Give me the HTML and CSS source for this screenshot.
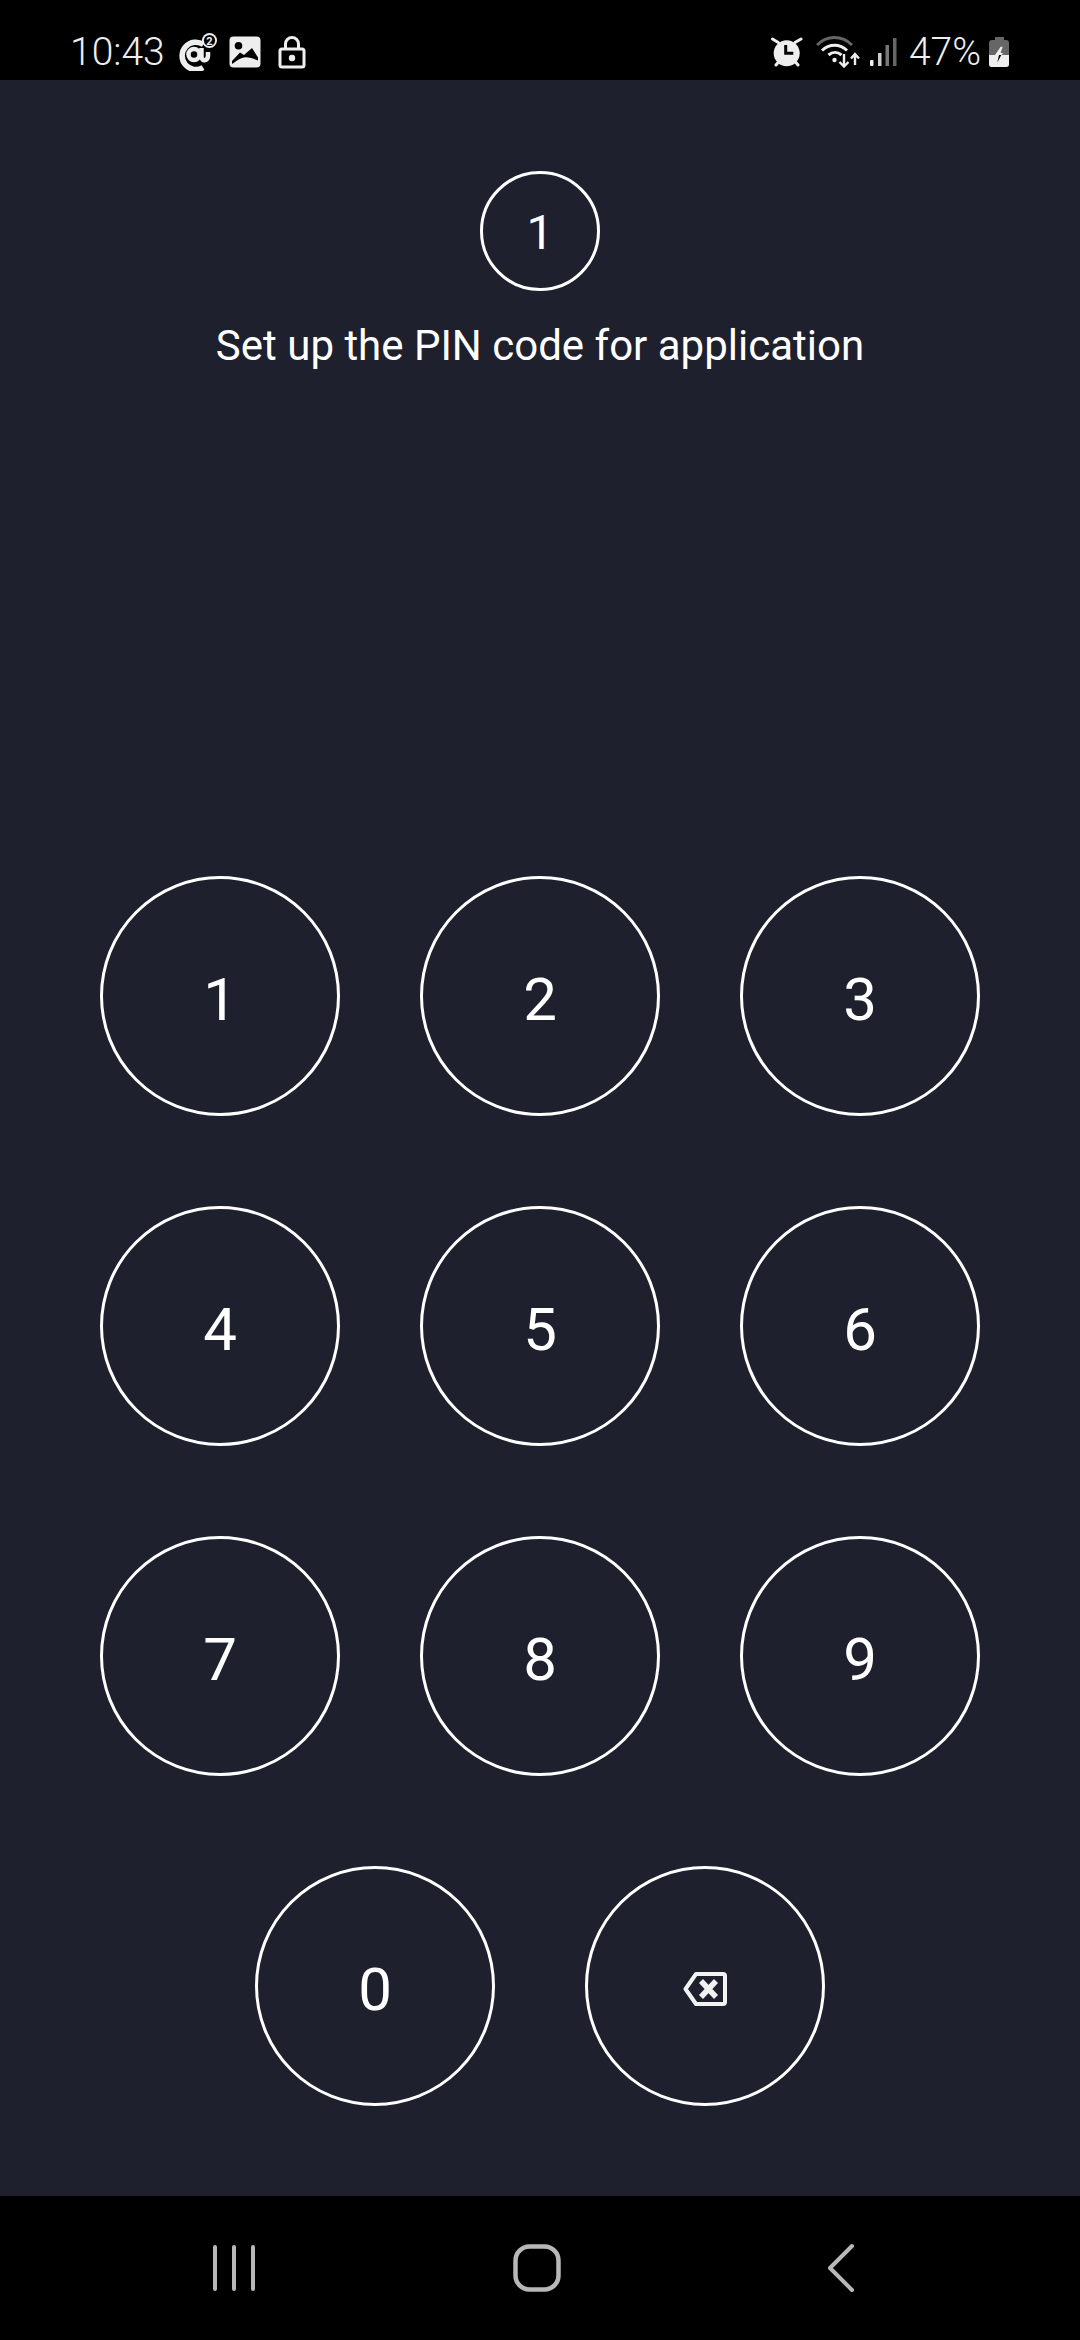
FILE: index.html
```html
<!DOCTYPE html>
<html lang="en">
<head>
<meta charset="utf-8">
<title>Set up PIN</title>
<link rel="stylesheet" href="styles.css">
</head>
<body>
<div class="app">
  <header class="status">
    <div class="status-left">
      <span class="time">10:43</span>
      <svg class="ic ic-at" viewBox="0 0 40 38" width="40" height="38"><path d="M25 34.500A13.700 13.700 0 1 1 25.500 11.500" fill="none" stroke="#eee" stroke-width="5.500"/><circle cx="16" cy="21.500" r="5.500" fill="none" stroke="#eee" stroke-width="4.500"/><path d="M23.500 15v9c0 4.500 6.500 4.500 6.500-1.500V19" fill="none" stroke="#eee" stroke-width="4.500"/><circle cx="31.500" cy="7.500" r="7.500" fill="#eee"/><circle cx="31.500" cy="7.500" r="5.600" fill="#000"/><text x="31.500" y="11.500" class="sup">2</text></svg>
      <svg class="ic ic-pic" viewBox="0 0 32 32" width="32" height="32"><rect x="0.500" y="0.500" width="31" height="31" rx="4" fill="#eee"/><circle cx="9.500" cy="9.700" r="3.800" fill="#000"/><path d="M3 25L11 16.500L15 19L23 12L29 21.500V24.500C25 23 18 20 13 22C9 23.500 6 26 3 28Z" fill="#000"/></svg>
      <svg class="ic ic-lock" viewBox="0 0 28 33" width="28" height="33"><rect x="2" y="13" width="24" height="18" rx="2" fill="none" stroke="#eee" stroke-width="3"/><path d="M7.500 13V8a6.500 6.500 0 0 1 13 0V13" fill="none" stroke="#eee" stroke-width="3"/><circle cx="14" cy="22" r="3.200" fill="#eee"/></svg>
    </div>
    <div class="status-right">
      <svg class="ic ic-alarm" viewBox="0 0 32 32" width="32" height="32"><path d="M1.500 3L7.300 6.500M30 3L24 6.500M5 29l2.500-3M27 29l-2.500-3" fill="none" stroke="#eee" stroke-width="3" stroke-linecap="round"/><circle cx="15.700" cy="17.300" r="13" fill="#eee"/><path d="M14.700 9v8.300h7.600" fill="none" stroke="#000" stroke-width="3"/></svg>
      <svg class="ic ic-wifi" viewBox="0 0 44 32" width="44" height="32"><path d="M1 9C11-1 26-1 36 9" fill="none" stroke="#666" stroke-width="3"/><path d="M6 14.500c7-7 18-7 25 0" fill="none" stroke="#eee" stroke-width="3"/><path d="M12.500 19c4-3.500 9-3.500 13 0" fill="none" stroke="#eee" stroke-width="3"/><circle cx="18.500" cy="24" r="2.200" fill="#eee"/><path d="M28 18v13M23.500 26l4.500 4.500 4.500-4.500" fill="none" stroke="#eee" stroke-width="2.400"/><path d="M39 29V18M35 22.500l4-4.500 4 4.500" fill="none" stroke="#eee" stroke-width="2.400"/></svg>
      <svg class="ic ic-signal" viewBox="0 0 28 32" width="28" height="32"><rect x="1" y="24" width="3.500" height="6" rx="1" fill="#eee"/><rect x="9" y="17" width="3.500" height="13" fill="#ccc"/><rect x="16.500" y="9" width="3.500" height="21" fill="#777"/><rect x="24" y="2" width="3.500" height="28" fill="#666"/></svg>
      <span class="pct">47%</span>
      <svg class="ic ic-batt" viewBox="0 0 20 30" width="20" height="30"><path d="M6 0h9v3h2a3 3 0 0 1 3 3v21a3 3 0 0 1-3 3H3a3 3 0 0 1-3-3V6a3 3 0 0 1 3-3h3z" fill="#666"/><path d="M0 18h20v9a3 3 0 0 1-3 3H3a3 3 0 0 1-3-3z" fill="#eee"/><path d="M11.700 9.700h2L11.500 16h3L12.300 18H6z" fill="#eee"/><path d="M6.500 18h5.800L8.300 25.500 10 18z" fill="#000"/></svg>
    </div>
  </header>

  <main class="screen">
    <div class="step">1</div>
    <h1 class="title">Set up the PIN code for application</h1>
    <div class="keypad">
      <div class="row">
        <button class="key">1</button><button class="key">2</button><button class="key">3</button>
      </div>
      <div class="row">
        <button class="key">4</button><button class="key">5</button><button class="key">6</button>
      </div>
      <div class="row">
        <button class="key">7</button><button class="key">8</button><button class="key">9</button>
      </div>
      <div class="row row-last">
        <button class="key">0</button>
        <button class="key" aria-label="Delete">
          <svg viewBox="0 0 44 34" width="44" height="34"><path d="M13 2h27a2 2 0 0 1 2 2v26a2 2 0 0 1-2 2H13L2.500 17z" fill="none" stroke="#f2f2f2" stroke-width="4" stroke-linejoin="round"/><path d="M18 9l15 16M33 9L18 25" stroke="#f2f2f2" stroke-width="5.500"/></svg>
        </button>
      </div>
    </div>
  </main>

  <nav class="navbar">
    <svg class="nav-recents" viewBox="0 0 44 48" width="44" height="48"><path d="M3 3v42M22 3v42M41 3v42" stroke="#b8b8b8" stroke-width="4" stroke-linecap="round" fill="none"/></svg>
    <svg class="nav-home" viewBox="0 0 48 48" width="48" height="48"><rect x="2.500" y="2.500" width="43" height="43" rx="14" fill="none" stroke="#b8b8b8" stroke-width="4.500"/></svg>
    <svg class="nav-back" viewBox="0 0 30 50" width="30" height="50"><path d="M26 3L4 25l22 22" stroke="#b8b8b8" stroke-width="4" stroke-linecap="round" stroke-linejoin="round" fill="none"/></svg>
  </nav>
</div>
</body>
</html>
```
FILE: styles.css
```css
* { box-sizing: border-box; }
html, body { margin: 0; padding: 0; background: #000; }
.app {
  width: 1080px;
  height: 2340px;
  display: flex;
  flex-direction: column;
  font-family: Roboto, "Liberation Sans", sans-serif;
  color: #fff;
}
.status {
  height: 80px;
  flex: none;
  background: #000;
  display: flex;
  align-items: center;
  justify-content: space-between;
  padding: 24px 71px 0 70px;
  color: #eee;
}
.status-left, .status-right { display: flex; align-items: center; }
.ic { display: block; flex: none; }
.time { font-size: 39px; font-weight: 300; line-height: 44px; }
.ic-at { margin-left: 13px; }
.ic-pic { margin-left: 11px; }
.ic-lock { margin-left: 17px; }
.ic-wifi { margin-left: 13px; }
.ic-signal { margin-left: 9px; }
.pct { font-size: 39px; font-weight: 300; line-height: 44px; margin-left: 12px; }
.ic-batt { margin-left: 8px; }
.sup { font: 700 11px Roboto, sans-serif; fill: #eee; text-anchor: middle; }
.screen {
  flex: 1;
  background: #1e202d;
  display: flex;
  flex-direction: column;
  align-items: center;
  padding-top: 91px;
}
.step {
  width: 120px;
  height: 120px;
  border: 3px solid #fff;
  border-radius: 50%;
  display: flex;
  align-items: center;
  justify-content: center;
  padding-top: 2px;
  font-size: 48px;
}
.title {
  margin: 30px 0 0;
  font-size: 42px;
  font-weight: 400;
  line-height: 50px;
}
.keypad {
  margin-top: 505px;
  display: flex;
  flex-direction: column;
  gap: 90px;
}
.row { display: flex; justify-content: center; gap: 80px; }
.row-last { gap: 90px; }
.key {
  width: 240px;
  height: 240px;
  padding: 6px 0 0;
  background: transparent;
  border: 3px solid #fff;
  border-radius: 50%;
  color: #fff;
  font-family: Roboto, sans-serif;
  font-size: 60px;
  display: flex;
  align-items: center;
  justify-content: center;
}
.navbar {
  height: 144px;
  flex: none;
  background: #000;
  display: flex;
  align-items: center;
  padding-left: 212px;
}
.nav-home { margin-left: 257px; }
.nav-back { margin-left: 265px; }
```
